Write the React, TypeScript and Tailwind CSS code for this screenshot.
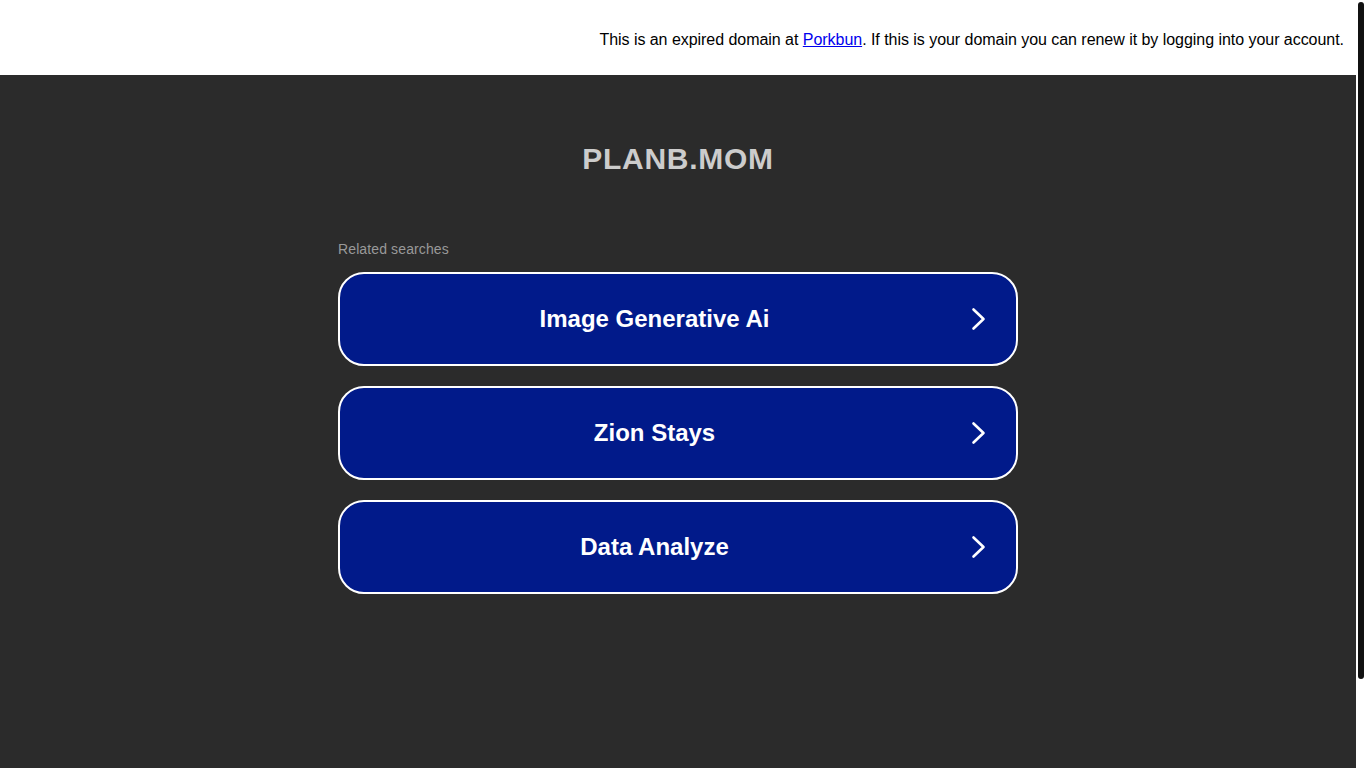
import React from 'react';

const searches = ['Image Generative Ai', 'Zion Stays', 'Data Analyze'];

const Chevron = () => (
  <svg width="20" height="24" viewBox="0 0 20 24" fill="none" stroke="white" strokeWidth="2.6" strokeLinecap="round" strokeLinejoin="round">
    <path d="M4.5 2.5 L14.5 12 L4.5 21.5" />
  </svg>
);

const App: React.FC = () => {
  return (
    <div className="flex w-full h-screen overflow-hidden bg-white font-['Liberation_Sans',Arial,sans-serif]">
      <div className="flex-1 flex flex-col">
        <header className="h-[75px] shrink-0 flex items-center justify-end pr-3 pt-[5px] bg-white text-black text-[16px] tracking-[-0.04px]">
          <p>
            This is an expired domain at{' '}
            <a href="#" className="text-[#0000ee] underline">
              Porkbun
            </a>
            . If this is your domain you can renew it by logging into your account.
          </p>
        </header>
        <main className="flex-1 bg-[#2b2b2b] pt-[66px] flex flex-col items-center">
          <h1 className="text-[30px] leading-[36px] font-bold tracking-[0.7px] text-[#cccccc]">PLANB.MOM</h1>
          <div className="w-[680px] mt-[62px]">
            <h2 className="text-[14px] leading-[20px] tracking-[0.12px] text-[#999999] mb-[13px]">Related searches</h2>
            <ul className="flex flex-col gap-5">
              {searches.map((s) => (
                <li key={s}>
                  <a
                    href="#"
                    className="h-[94px] flex items-center rounded-[26px] border-2 border-white bg-[#011a8a] pr-[27px]"
                  >
                    <span className="flex-1 text-center text-white text-[24px] font-bold">{s}</span>
                    <Chevron />
                  </a>
                </li>
              ))}
            </ul>
          </div>
        </main>
      </div>
      {/* scrollbar track */}
      <div className="w-[10px] shrink-0 bg-white pt-[2px] pl-[2px]">
        <div className="w-[6px] h-[677px] rounded-full bg-[#111111]" />
      </div>
    </div>
  );
};

export default App;
